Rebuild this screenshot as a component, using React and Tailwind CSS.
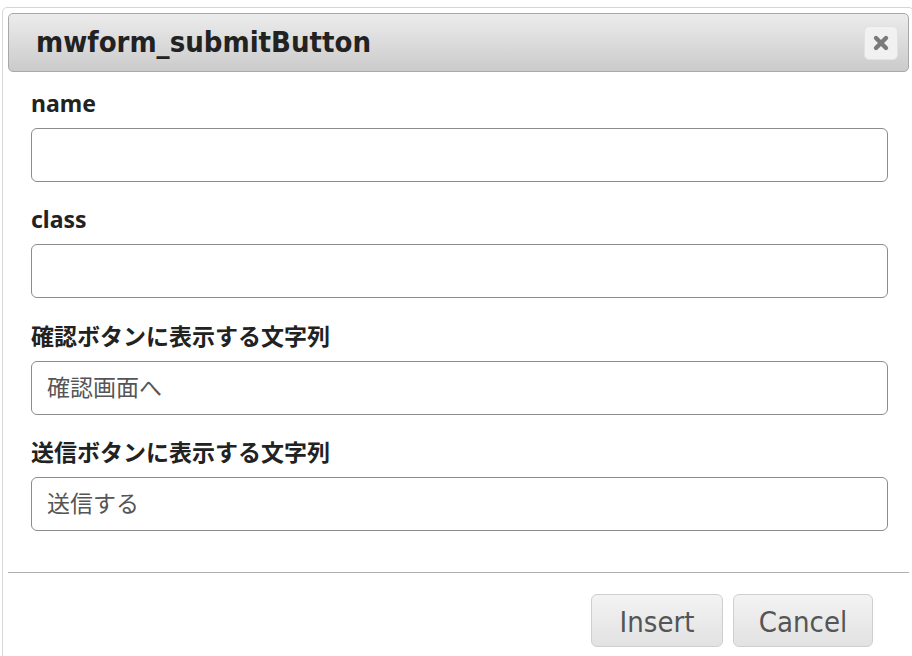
import React from "react";

function Field({ label, value, className = "" }) {
  return (
    <div className={"flex flex-col " + className}>
      <div
        className="h-[26px] leading-[26px] text-[23px] font-bold text-[#222]"
        style={{ fontFamily: '"Noto Sans", "Noto Sans CJK JP", sans-serif' }}
      >
        {label}
      </div>
      <div className="mt-[12px] h-[54px] w-[857px] rounded-[6px] border border-[#8c8c8c] bg-white flex items-center px-[15px] pb-[3px]">
        <span
          className="text-[23px] text-[#555]"
          style={{ fontFamily: '"Noto Sans CJK JP", "Noto Sans", sans-serif' }}
        >
          {value}
        </span>
      </div>
    </div>
  );
}

export default function App() {
  return (
    <div className="w-[912px] h-[656px] bg-white overflow-hidden pt-[7px] pl-[2px]">
      <div className="w-[912px] h-[700px] rounded-[5px] border border-[#d6d6d6] bg-white p-[5px]">
        {/* header */}
        <div className="h-[59px] w-[901px] rounded-[5px] border border-[#a8a8a8] bg-gradient-to-b from-[#ececec] to-[#cbcbcb] flex items-center justify-between pl-[27px] pr-[10px]">
          <span
            className="text-[29px] font-bold text-[#222] font-stretch-condensed"
            style={{ fontFamily: '"DejaVu Sans", sans-serif' }}
          >
            mwform_submitButton
          </span>
          <div className="w-[34px] h-[34px] rounded-[5px] bg-[#f1f1f1] border border-[#e2e2e2] flex items-center justify-center">
            <svg width="18" height="18" viewBox="0 0 18 18">
              <path d="M4 4 L14 14 M14 4 L4 14" stroke="#7a7a7a" strokeWidth="4.4" strokeLinecap="round" />
            </svg>
          </div>
        </div>
        {/* body */}
        <div className="pl-[23px] pt-[18px] flex flex-col">
          <Field label="name" value="" />
          <Field label="class" value="" className="mt-[24px]" />
          <Field label="確認ボタンに表示する文字列" value="確認画面へ" className="mt-[25px]" />
          <Field label="送信ボタンに表示する文字列" value="送信する" className="mt-[24px]" />
        </div>
        <div className="mt-[41px] h-px w-[901px] bg-[#b0b0b0]" />
        <div className="flex justify-end gap-[10px] pt-[21px] pr-[35px]">
          <button
            className="h-[53px] w-[132px] rounded-[6px] border border-[#cfcfcf] bg-gradient-to-b from-[#f3f3f3] to-[#e2e2e2] text-[29px] text-[#555] font-stretch-condensed pt-[4px]"
            style={{ fontFamily: '"DejaVu Sans", sans-serif' }}
          >
            Insert
          </button>
          <button
            className="h-[53px] w-[140px] rounded-[6px] border border-[#cfcfcf] bg-gradient-to-b from-[#f3f3f3] to-[#e2e2e2] text-[29px] text-[#555] font-stretch-condensed pt-[4px]"
            style={{ fontFamily: '"DejaVu Sans", sans-serif' }}
          >
            Cancel
          </button>
        </div>
      </div>
    </div>
  );
}
